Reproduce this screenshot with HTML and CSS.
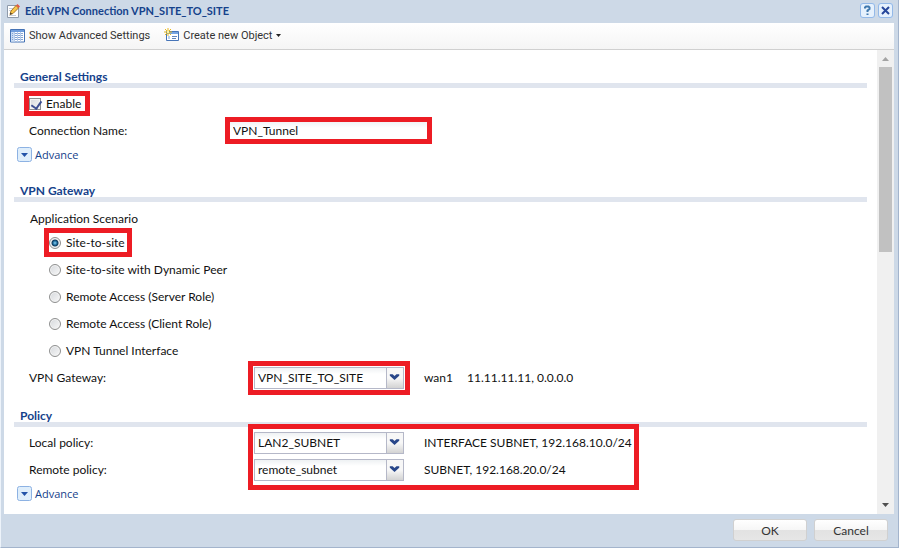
FILE: index.html
```
<!DOCTYPE html>
<html lang="en">

<head>
    <meta charset="UTF-8">
    <meta name="viewport" content="width=device-width, initial-scale=1.0">
    <title>Edit VPN Connection</title>
    <link rel="stylesheet" href="styles.css">
</head>

<body>
    <div class="window">
        <header class="titlebar">
            <svg class="icon" width="15" height="16" viewBox="0 0 15 16">
                <path d="M1.500 2.500h11v12h-11z" fill="#fff" stroke="#8e9aaa" />
                <path d="M3 5.500h4M3 7.500h3M3 12.500h7" stroke="#c5cdd8" />
                <path d="M4 11.500l1-3.500 5-5.500 2.500 2.500-5.500 5.500z" fill="#f8c74c" stroke="#a87525" />
                <path d="M10 2.500l1.500-1.500 2.500 2.500-1.500 1.500z" fill="#e05a45" />
                <path d="M4 11.500l.6-2 1.500 1.500z" fill="#333" />
            </svg>
            <h1>Edit VPN Connection VPN_SITE_TO_SITE</h1>
            <button class="tool" type="button" aria-label="Help">
                <svg width="15" height="15" viewBox="0 0 15 15">
                    <path d="M5 5.500V4.500L6 3.500H8.500L9.500 4.500V6L7.500 7.500V9M7.500 10.500V12" fill="none" stroke="#3f78ae" stroke-width="2" />
                </svg>
            </button>
            <button class="tool" type="button" aria-label="Close">
                <svg width="15" height="15" viewBox="0 0 15 15">
                    <path d="M4 4l7 7M11 4l-7 7" stroke="#27479b" stroke-width="2" />
                </svg>
            </button>
        </header>

        <div class="toolbar">
            <button type="button">
                <svg width="15" height="14" viewBox="0 0 15 14">
                    <path d="M.5.5h14v12.500H.5z" fill="#fff" stroke="#4573b5" />
                    <path d="M1 1h13v2H1z" fill="#6f9ddd" />
                    <path d="M1 3h3v9.500H1z" fill="#c9dcf5" />
                    <path d="M5 4.500h2M8 4.500h2M11 4.500h2M5 6.500h2M8 6.500h2M11 6.500h2M5 8.500h2M8 8.500h2M11 8.500h2M5 10.500h2M8 10.500h2M11 10.500h2M2 4.500h1M2 6.500h1M2 8.500h1M2 10.500h1" stroke="#86a5d2" />
                    <path d="M4.500 3v10M7.500 3v10M10.500 3v10" stroke="#b5cbea" />
                </svg>
                Show Advanced Settings
            </button>
            <button type="button">
                <svg width="15" height="15" viewBox="0 0 15 15">
                    <path d="M2.500 3.500h12v9h-12z" fill="#fff" stroke="#4775b8" />
                    <path d="M3 4h11v2H3z" fill="#78a5e0" />
                    <path d="M4 8h2v3H4z" fill="#b9d0ed" />
                    <path d="M8 8.500h5M8 10.500h4" stroke="#6185bc" />
                    <path d="M4 0v8M0 4h8M1 1l6 6M7 1l-6 6" stroke="#e9b91e" />
                    <path d="M3 3h2v2H3z" fill="#fff7a0" />
                </svg>
                Create new Object
                <svg class="caret" width="5" height="3" viewBox="0 0 5 3">
                    <path d="M0 0h5L2.500 3z" fill="#222" />
                </svg>
            </button>
        </div>

        <div class="body">
            <form class="form" id="vpnForm">
                <section>
                    <h2>General Settings</h2>
                    <div class="row">
                        <label class="check marked"><input type="checkbox" name="enable" checked>Enable</label>
                    </div>
                    <div class="row">
                        <label class="name short" for="connectionName">Connection Name:</label>
                        <input class="text marked" type="text" id="connectionName" name="connectionName" value="VPN_Tunnel">
                    </div>
                    <button class="advance" type="button">
                        <svg width="15" height="15" viewBox="0 0 15 15">
                            <rect x=".5" y=".5" width="14" height="14" rx="2" fill="#dfeefb" stroke="#8db2e3" />
                            <path d="M4 6h7l-3.500 4z" fill="#2353a8" />
                        </svg>
                        Advance
                    </button>
                </section>

                <section>
                    <h2>VPN Gateway</h2>
                    <div class="scenario" id="scenario">Application Scenario</div>
                    <div class="radios" role="radiogroup" aria-labelledby="scenario">
                        <div class="row"><label class="radio marked"><input type="radio" name="scenario" checked>Site-to-site</label></div>
                        <div class="row"><label class="radio"><input type="radio" name="scenario">Site-to-site with Dynamic Peer</label></div>
                        <div class="row"><label class="radio"><input type="radio" name="scenario">Remote Access (Server Role)</label></div>
                        <div class="row"><label class="radio"><input type="radio" name="scenario">Remote Access (Client Role)</label></div>
                        <div class="row"><label class="radio"><input type="radio" name="scenario">VPN Tunnel Interface</label></div>
                    </div>
                    <div class="row">
                        <label class="name" for="gateway">VPN Gateway:</label>
                        <div class="combo marked">
                            <select id="gateway" name="gateway">
                                <option>VPN_SITE_TO_SITE</option>
                            </select>
                            <svg class="trigger" width="17" height="20" viewBox="0 0 17 20">
                                <path d="M3 6h3l2 2 2-2h3v1.500L8 12 3 7.500z" fill="#29478a" />
                            </svg>
                        </div>
                        <span class="info"><span class="iface">wan1</span>11.11.11.11, 0.0.0.0</span>
                    </div>
                </section>

                <section>
                    <h2>Policy</h2>
                    <div class="policy">
                        <div class="names">
                            <div class="row"><label class="name" for="localPolicy">Local policy:</label></div>
                            <div class="row"><label class="name" for="remotePolicy">Remote policy:</label></div>
                        </div>
                        <div class="values marked">
                            <div class="row">
                                <div class="combo">
                                    <select id="localPolicy" name="localPolicy">
                                        <option>LAN2_SUBNET</option>
                                    </select>
                                    <svg class="trigger" width="17" height="20" viewBox="0 0 17 20">
                                        <path d="M3 6h3l2 2 2-2h3v1.500L8 12 3 7.500z" fill="#29478a" />
                                    </svg>
                                </div>
                                <span class="info">INTERFACE SUBNET, 192.168.10.0/24</span>
                            </div>
                            <div class="row">
                                <div class="combo">
                                    <select id="remotePolicy" name="remotePolicy">
                                        <option>remote_subnet</option>
                                    </select>
                                    <svg class="trigger" width="17" height="20" viewBox="0 0 17 20">
                                        <path d="M3 6h3l2 2 2-2h3v1.500L8 12 3 7.500z" fill="#29478a" />
                                    </svg>
                                </div>
                                <span class="info">SUBNET, 192.168.20.0/24</span>
                            </div>
                        </div>
                    </div>
                    <button class="advance" type="button">
                        <svg width="15" height="15" viewBox="0 0 15 15">
                            <rect x=".5" y=".5" width="14" height="14" rx="2" fill="#dfeefb" stroke="#8db2e3" />
                            <path d="M4 6h7l-3.500 4z" fill="#2353a8" />
                        </svg>
                        Advance
                    </button>
                </section>
            </form>

            <div class="scrollbar">
                <svg width="17" height="17" viewBox="0 0 17 17">
                    <path d="M5 11h7L8.500 7z" fill="#a3a3a3" />
                </svg>
                <div class="track">
                    <div class="thumb"></div>
                </div>
                <svg width="17" height="17" viewBox="0 0 17 17">
                    <path d="M5 6h7l-3.500 4z" fill="#505050" />
                </svg>
            </div>
        </div>

        <footer class="footer">
            <button type="submit" form="vpnForm">OK</button>
            <button type="button">Cancel</button>
        </footer>
    </div>
</body>

</html>
```
FILE: styles.css
```
* {
    box-sizing: border-box;
}

body {
    margin: 0;
    font-family: "Century Gothic", Lato, sans-serif;
    font-size: 12px;
    color: #111;
}

button,
input,
select {
    font: inherit;
    color: inherit;
}

svg {
    flex: none;
}

h1,
h2 {
    margin: 0;
    font-size: 12px;
    font-weight: bold;
    color: #15428b;
}

.window {
    display: flex;
    flex-direction: column;
    height: 100vh;
    padding: 0 4px 3px 3px;
    background: #cdd9e7;
    border-left: 1px solid #edf3fa;
    border-right: 1px solid #a3b4cc;
    border-bottom: 1px solid #a3b4cc;
}

.titlebar {
    display: flex;
    align-items: center;
    flex: none;
    height: 23px;
    gap: 3px;
    padding: 0 1px 2px 2px;
}

.titlebar h1 {
    flex: 1;
    padding-left: 1px;
    font-size: 11px;
}

.tool {
    display: flex;
    width: 15px;
    height: 15px;
    padding: 0;
    border: 0;
    border-radius: 3px;
    background: #e6f1fd;
    box-shadow: inset 0 0 0 1px #94b9e8;
}

.toolbar {
    display: flex;
    flex: none;
    height: 27px;
    gap: 14px;
    padding: 0 6px 1px;
    background: linear-gradient(#fff, #f5f5f5);
    border-bottom: 1px solid #d0d0d0;
}

.toolbar button {
    display: flex;
    align-items: center;
    gap: 4px;
    padding: 0;
    border: 0;
    background: none;
    font-family: Tahoma, Roboto, sans-serif;
    font-size: 11px;
    color: #333;
}

/* form area */
.body {
    display: flex;
    flex: 1;
    min-height: 0;
    background: #fff;
}

.form {
    flex: 1;
    padding: 3px 10px 0;
    overflow: hidden;
}

section {
    padding-top: 18px;
}

h2 {
    height: 17px;
    margin-bottom: 3px;
    padding-left: 6px;
    line-height: 12px;
    border-bottom: 5px solid #e0e5ee;
}

.row {
    display: flex;
    align-items: center;
    height: 27px;
    padding: 0 0 2px 15px;
}

.name {
    width: 225px;
}

.short {
    width: 201px;
}

.marked {
    outline: 5px solid #ed1c24;
}

.check,
.radio {
    display: flex;
    align-items: center;
}

.check {
    height: 15px;
    gap: 5px;
    padding-right: 4px;
}

.radio {
    height: 19px;
    gap: 5px;
    padding-right: 2px;
}

.check input,
.radio input {
    appearance: none;
    width: 12px;
    height: 12px;
    margin: 0;
    border: 1px solid #8e8f8f;
    background: linear-gradient(135deg, #d5d8dc, #f8f8f8);
    box-shadow: inset 0 0 0 1px #f4f4f4;
}

.radio input {
    border-radius: 50%;
}

.radio input:checked {
    background: radial-gradient(circle at 5px 5px, #8fd4f5 0, #1c6a9c 2px, #123a5c 3px, #e6e9ec 4px);
}

.check input {
    position: relative;
}

.check input:checked::after {
    content: "";
    position: absolute;
    left: 3px;
    top: 0;
    width: 5px;
    height: 8px;
    border: solid #3c4e91;
    border-width: 0 2px 2px 0;
    transform: rotate(35deg);
}

.text {
    width: 197px;
    height: 17px;
    padding: 0 3px;
    border: 0;
    background: linear-gradient(#f1f3f5, #fff 6px);
}

.text:focus {
    outline: 5px solid #ed1c24;
}

.scenario {
    height: 25px;
    padding: 3px 16px 0;
    line-height: 22px;
}

.radios {
    padding-left: 20px;
}

.combo {
    position: relative;
    width: 150px;
    height: 22px;
    border: 1px solid #b5b8c8;
}

.combo.marked,
.values.marked {
    outline-offset: 1px;
}

.combo select {
    appearance: none;
    display: block;
    width: 100%;
    height: 20px;
    padding: 0 20px 0 3px;
    border: 0;
    border-radius: 0;
    outline: 0;
    background: linear-gradient(#eef1f3, #fff 6px);
}

.trigger {
    position: absolute;
    top: 0;
    right: 0;
    background: linear-gradient(#f7f7f7 50%, #d3d3d3);
    border-left: 1px solid #b5b8c8;
    pointer-events: none;
}

.info {
    padding-left: 20px;
}

.iface {
    display: inline-block;
    width: 43px;
}

.policy {
    display: flex;
}

.values {
    width: 379px;
}

.values .row {
    padding-left: 0;
}

.advance {
    display: flex;
    align-items: center;
    height: 22px;
    gap: 3px;
    padding: 0 3px 3px;
    border: 0;
    background: none;
    font-family: Tahoma, "Open Sans", sans-serif;
    font-size: 11px;
    color: #15428b;
}

.scrollbar {
    display: flex;
    flex-direction: column;
    flex: none;
    width: 17px;
    background: #f0f0f0;
}

.track {
    flex: 1;
    padding: 0 2px;
}

.thumb {
    height: 43%;
    background: #c1c1c1;
}

.footer {
    display: flex;
    flex: none;
    justify-content: flex-end;
    height: 30px;
    gap: 7px;
    padding: 5px 6px 0 0;
}

.footer button {
    width: 74px;
    height: 22px;
    padding: 0;
    border: 1px solid #d0d0d0;
    border-radius: 3px;
    background: linear-gradient(#fff, #f6f6f6 50%, #e2e2e2 50%, #e6e6e6);
    color: #333;
}
```
